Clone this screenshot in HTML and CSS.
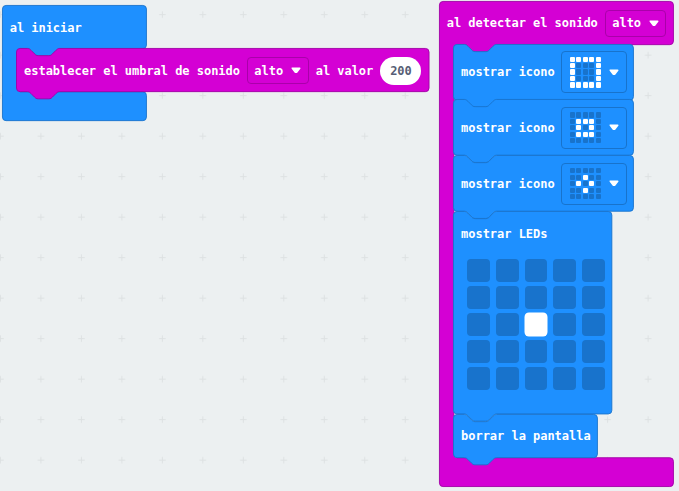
FILE: index.html
```html
<!DOCTYPE html>
<html lang="es">
<head>
<meta charset="utf-8">
<title>Bloques</title>
<link rel="stylesheet" href="styles.css">
</head>
<body>
<main class="workspace">
  <svg class="grid-lines" aria-hidden="true">
    <defs>
      <pattern id="cross" x="-19.8" y="-5.6" width="40.48" height="40.5" patternUnits="userSpaceOnUse">
        <path d="M17 20.25H23.5M20.25 17V23.5"/>
      </pattern>
    </defs>
    <rect width="100%" height="100%" fill="url(#cross)"/>
  </svg>

  <section class="block start">
    <svg class="shape blue" viewBox="0 0 160 128" width="144" height="115.2"><path d="M0 4a4 4 0 0 1 4-4H156a4 4 0 0 1 4 4V44a4 4 0 0 1-4 4H64c-2 0-3 1-4 2l-4 4c-1 1-2 2-4 2H40c-2 0-3-1-4-2l-4-4c-1-1-2-2-4-2H20a4 4 0 0 0-4 4V92a4 4 0 0 0 4 4H156a4 4 0 0 1 4 4V124a4 4 0 0 1-4 4H4a4 4 0 0 1-4-4Z"/></svg>
    <div class="row head"><span>al iniciar</span></div>
    <div class="stack">
      <div class="block row threshold">
        <svg class="shape magenta" viewBox="0 0 458.5 48" width="412.65" height="43.2"><path d="M0 4a4 4 0 0 1 4-4H12c2 0 3 1 4 2l4 4c1 1 2 2 4 2h12c2 0 3-1 4-2l4-4c1-1 2-2 4-2H454.5a4 4 0 0 1 4 4V44a4 4 0 0 1-4 4H48c-2 0-3 1-4 2l-4 4c-1 1-2 2-4 2H24c-2 0-3-1-4-2l-4-4c-1-1-2-2-4-2H4a4 4 0 0 1-4-4Z"/></svg>
        <span>establecer el umbral de sonido</span>
        <span class="field magenta-field">alto<svg class="arrow" viewBox="0 0 10 7"><path d="M1.3 1.2H8.7L5.6 5.3H4.4Z"/></svg></span>
        <span>al valor</span>
        <span class="number">200</span>
      </div>
    </div>
  </section>

  <section class="block event">
    <svg class="shape magenta" viewBox="0 0 260 539" width="234" height="485.1"><path d="M0 4a4 4 0 0 1 4-4H256a4 4 0 0 1 4 4V44a4 4 0 0 1-4 4H64c-2 0-3 1-4 2l-4 4c-1 1-2 2-4 2H40c-2 0-3-1-4-2l-4-4c-1-1-2-2-4-2H20a4 4 0 0 0-4 4V503a4 4 0 0 0 4 4H256a4 4 0 0 1 4 4V535a4 4 0 0 1-4 4H4a4 4 0 0 1-4-4Z"/></svg>
    <div class="row head"><span>al detectar el sonido</span><span class="field magenta-field">alto<svg class="arrow" viewBox="0 0 10 7"><path d="M1.3 1.2H8.7L5.6 5.3H4.4Z"/></svg></span></div>
    <div class="stack">
      <div class="block row icon-block" data-icon="1111110001100011000111111"></div>
      <div class="block row icon-block" data-icon="0000001110010100111000000"></div>
      <div class="block row icon-block" data-icon="0000000100010100010000000"></div>
      <div class="block led-block">
        <svg class="shape blue" viewBox="0 0 176 225" width="158.4" height="202.5"><path d="M0 4a4 4 0 0 1 4-4H12c2 0 3 1 4 2l4 4c1 1 2 2 4 2h12c2 0 3-1 4-2l4-4c1-1 2-2 4-2H172a4 4 0 0 1 4 4V221a4 4 0 0 1-4 4H48c-2 0-3 1-4 2l-4 4c-1 1-2 2-4 2H24c-2 0-3-1-4-2l-4-4c-1-1-2-2-4-2H4a4 4 0 0 1-4-4Z"/></svg>
        <div class="row head"><span>mostrar LEDs</span></div>
        <div class="leds" data-leds="0000000000001000000000000"></div>
      </div>
      <div class="block row clear-block">
        <svg class="shape blue" viewBox="0 0 160 48" width="144" height="43.2"><path d="M0 4a4 4 0 0 1 4-4H12c2 0 3 1 4 2l4 4c1 1 2 2 4 2h12c2 0 3-1 4-2l4-4c1-1 2-2 4-2H156a4 4 0 0 1 4 4V44a4 4 0 0 1-4 4H48c-2 0-3 1-4 2l-4 4c-1 1-2 2-4 2H24c-2 0-3-1-4-2l-4-4c-1-1-2-2-4-2H4a4 4 0 0 1-4-4Z"/></svg>
        <span>borrar la pantalla</span>
      </div>
    </div>
  </section>
</main>
<script src="blocks.js"></script>
</body>
</html>
```
FILE: styles.css
```css
* { box-sizing: border-box; }
body { margin: 0; }

.workspace {
  position: relative;
  width: 679px;
  height: 491px;
  overflow: hidden;
  background: #ecf0f1;
  color: #fff;
  font: bold 12px/16px "DejaVu Sans Mono", monospace;
  letter-spacing: -0.03px;
}

.grid-lines { display: block; width: 100%; height: 100%; }
.grid-lines path { stroke: #dde1e2; stroke-width: 1; fill: none; }

/* Top-level blocks sit freely on the canvas. */
.start, .event { position: absolute; }
.start { left: 2px; top: 5px; width: 144px; }
.event { left: 439px; top: 0.5px; width: 234px; height: 485px; }

.block { isolation: isolate; }
.stack .block { position: relative; }

.shape { position: absolute; left: 0; top: 0; z-index: -1; overflow: visible; }
.shape path { stroke-width: 1; transform: translate(0.5px, 0.5px); }
.blue path { fill: #1e90ff; stroke: #1873cc; }
.magenta path { fill: #d400d4; stroke: #a000a5; }

.row { display: flex; align-items: center; height: 43.2px; padding-left: 7.7px; white-space: nowrap; }
.row > span { flex: none; }
.head { gap: 7.3px; }
.start > .head { padding-top: 3px; }
.event > .head { padding-top: 2px; }
.led-block > .head { padding-top: 2px; }
.stack { display: flex; flex-direction: column; padding-left: 14.4px; }

.threshold { width: 412.65px; gap: 7.2px; padding-top: 1.6px; }

.field {
  display: flex;
  align-items: center;
  width: 61.4px;
  height: 27px;
  padding-left: 6.2px;
  border: 1px solid #aa00aa;
  border-radius: 4px;
}
.arrow { width: 10px; height: 7px; margin-left: 7.6px; }
.arrow path { fill: #fff; stroke: #fff; stroke-width: 1.6; stroke-linejoin: round; }

.number {
  width: 41px;
  height: 28px;
  border-radius: 14px;
  background: #fff;
  color: #575e75;
  line-height: 28px;
  text-align: center;
}

.icon-block { width: 180px; height: 55.8px; gap: 6.8px; padding-top: 1px; }
.icon-field { width: 65.4px; height: 42px; padding-left: 7.2px; border-color: #1873cc; }
.icon-field .arrow { margin-left: 8.2px; }

.dots { display: grid; grid-template-columns: repeat(5, 5.2px); gap: 1.3px; }
.dots i { height: 5.2px; border-radius: 1px; background: #1873cc; }
.dots .on, .leds .on { background: #fff; }

.led-block { width: 158.4px; height: 202.5px; }
.leds {
  display: grid;
  grid-template-columns: repeat(5, 22.8px);
  gap: 4.2px 6px;
  padding: 4.8px 0 0 13.6px;
}
.leds i { height: 22.8px; border-radius: 4px; background: #1873cc; }
.leds .on { box-shadow: 0 0 0 0.5px #fff; }

.clear-block { width: 144px; padding-top: 2px; }
```
FILE: blocks.js
```js
const cells = bits => [...bits].map(b => `<i class="${b === "1" ? "on" : "off"}"></i>`).join("");

const statement = `<svg class="shape blue" viewBox="0 0 200 62" width="180" height="55.8"><path d="M0 4a4 4 0 0 1 4-4H12c2 0 3 1 4 2l4 4c1 1 2 2 4 2h12c2 0 3-1 4-2l4-4c1-1 2-2 4-2H196a4 4 0 0 1 4 4V58a4 4 0 0 1-4 4H48c-2 0-3 1-4 2l-4 4c-1 1-2 2-4 2H24c-2 0-3-1-4-2l-4-4c-1-1-2-2-4-2H4a4 4 0 0 1-4-4Z"/></svg>`;

document.querySelectorAll("[data-icon]").forEach(el => {
  el.innerHTML = `${statement}<span>mostrar icono</span><span class="field icon-field"><span class="dots">${cells(el.dataset.icon)}</span><svg class="arrow" viewBox="0 0 10 7"><path d="M1.3 1.2H8.7L5.6 5.3H4.4Z"/></svg></span>`;
});

document.querySelectorAll("[data-leds]").forEach(el => {
  el.innerHTML = cells(el.dataset.leds);
});
```
